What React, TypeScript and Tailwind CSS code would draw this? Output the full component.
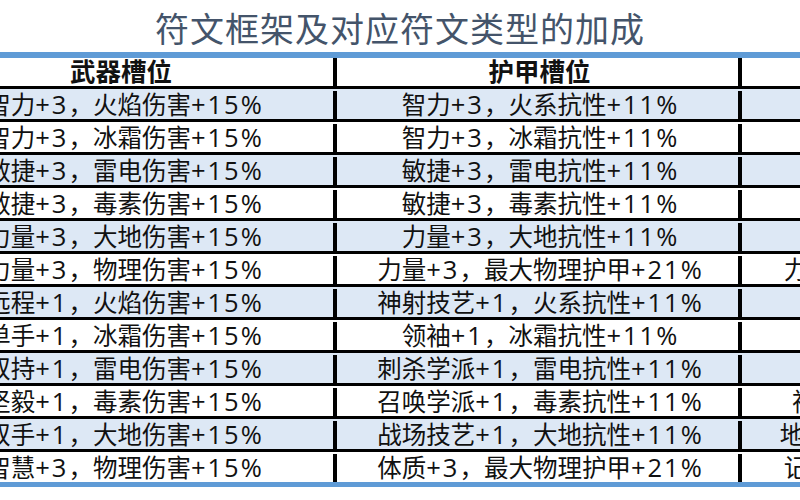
const rows: [string, string, string][] = [
  ["智力+3，火焰伤害+15%", "智力+3，火系抗性+11%", ""],
  ["智力+3，冰霜伤害+15%", "智力+3，冰霜抗性+11%", ""],
  ["敏捷+3，雷电伤害+15%", "敏捷+3，雷电抗性+11%", ""],
  ["敏捷+3，毒素伤害+15%", "敏捷+3，毒素抗性+11%", ""],
  ["力量+3，大地伤害+15%", "力量+3，大地抗性+11%", ""],
  ["力量+3，物理伤害+15%", "力量+3，最大物理护甲+21%", "力量+3，最大物理护甲+21%"],
  ["远程+1，火焰伤害+15%", "神射技艺+1，火系抗性+11%", ""],
  ["单手+1，冰霜伤害+15%", "领袖+1，冰霜抗性+11%", ""],
  ["双持+1，雷电伤害+15%", "刺杀学派+1，雷电抗性+11%", ""],
  ["坚毅+1，毒素伤害+15%", "召唤学派+1，毒素抗性+11%", "神圣学派+1，毒素伤害+8%"],
  ["双手+1，大地伤害+15%", "战场技艺+1，大地抗性+11%", "地狱技艺+1，全元素抗性+8%"],
  ["智慧+3，物理伤害+15%", "体质+3，最大物理护甲+21%", "记忆+3，最大物理护甲+21%"],
];

const font = {
  fontFamily: '"Open Sans", "Noto Sans CJK SC", sans-serif',
};

// digits and signs are set a little wider than the CJK glyphs, like the sheet's font
function Cell({ text }: { text: string }) {
  const parts = text.split(/([+0-9%]+)/).filter(Boolean);
  return (
    <span className="whitespace-nowrap">
      {parts.map((p, i) =>
        /^[+0-9%]+$/.test(p) ? (
          <span key={i} className="text-[25.5px] tracking-[2px]">
            {p}
          </span>
        ) : (
          <span key={i}>{p}</span>
        )
      )}
    </span>
  );
}

export default function App() {
  return (
    <div
      className="h-[500px] w-[800px] overflow-hidden bg-white text-[#111]"
      style={font}
    >
      {/* Title */}
      <div className="flex h-[52px] items-center justify-center pt-[6px] text-[34px] leading-none tracking-[1px] text-[#44546a]">
        符文框架及对应符文类型的加成
      </div>
      <div className="h-[6px] bg-[#5f9bd6]" />

      {/* Table, first column runs off the left edge */}
      <div className="ml-[-95px] w-[1300px]">
        <div className="flex h-[31px] border-b-[3px] border-black text-[25.5px] font-bold leading-none">
          <div className="flex w-[432px] shrink-0 items-center justify-center border-r-[4px] border-black pl-[4px]">
            武器槽位
          </div>
          <div className="flex w-[405px] shrink-0 items-center justify-center border-r-[4px] border-black pl-[4px]">
            护甲槽位
          </div>
          <div className="flex w-[410px] shrink-0 items-center justify-center">
            饰品槽位
          </div>
        </div>
        {rows.map((r, i) => (
          <div
            key={i}
            className={`flex pt-[2px] text-[24.5px] leading-none ${
              i % 2 === 0 ? "bg-[#dde8f5]" : "bg-white"
            } ${i === rows.length - 1 ? "h-[30px]" : "h-[33px] border-b-[3px] border-black"}`}
          >
            <div className="flex w-[432px] shrink-0 items-center justify-center border-r-[4px] border-black pl-[12px]">
              <Cell text={r[0]} />
            </div>
            <div className="flex w-[405px] shrink-0 items-center justify-center border-r-[4px] border-black pl-[6px]">
              <Cell text={r[1]} />
            </div>
            <div className="flex w-[410px] shrink-0 items-center justify-center">
              <Cell text={r[2]} />
            </div>
          </div>
        ))}
      </div>
      <div className="h-[5px] bg-[#5f9bd6]" />
    </div>
  );
}
